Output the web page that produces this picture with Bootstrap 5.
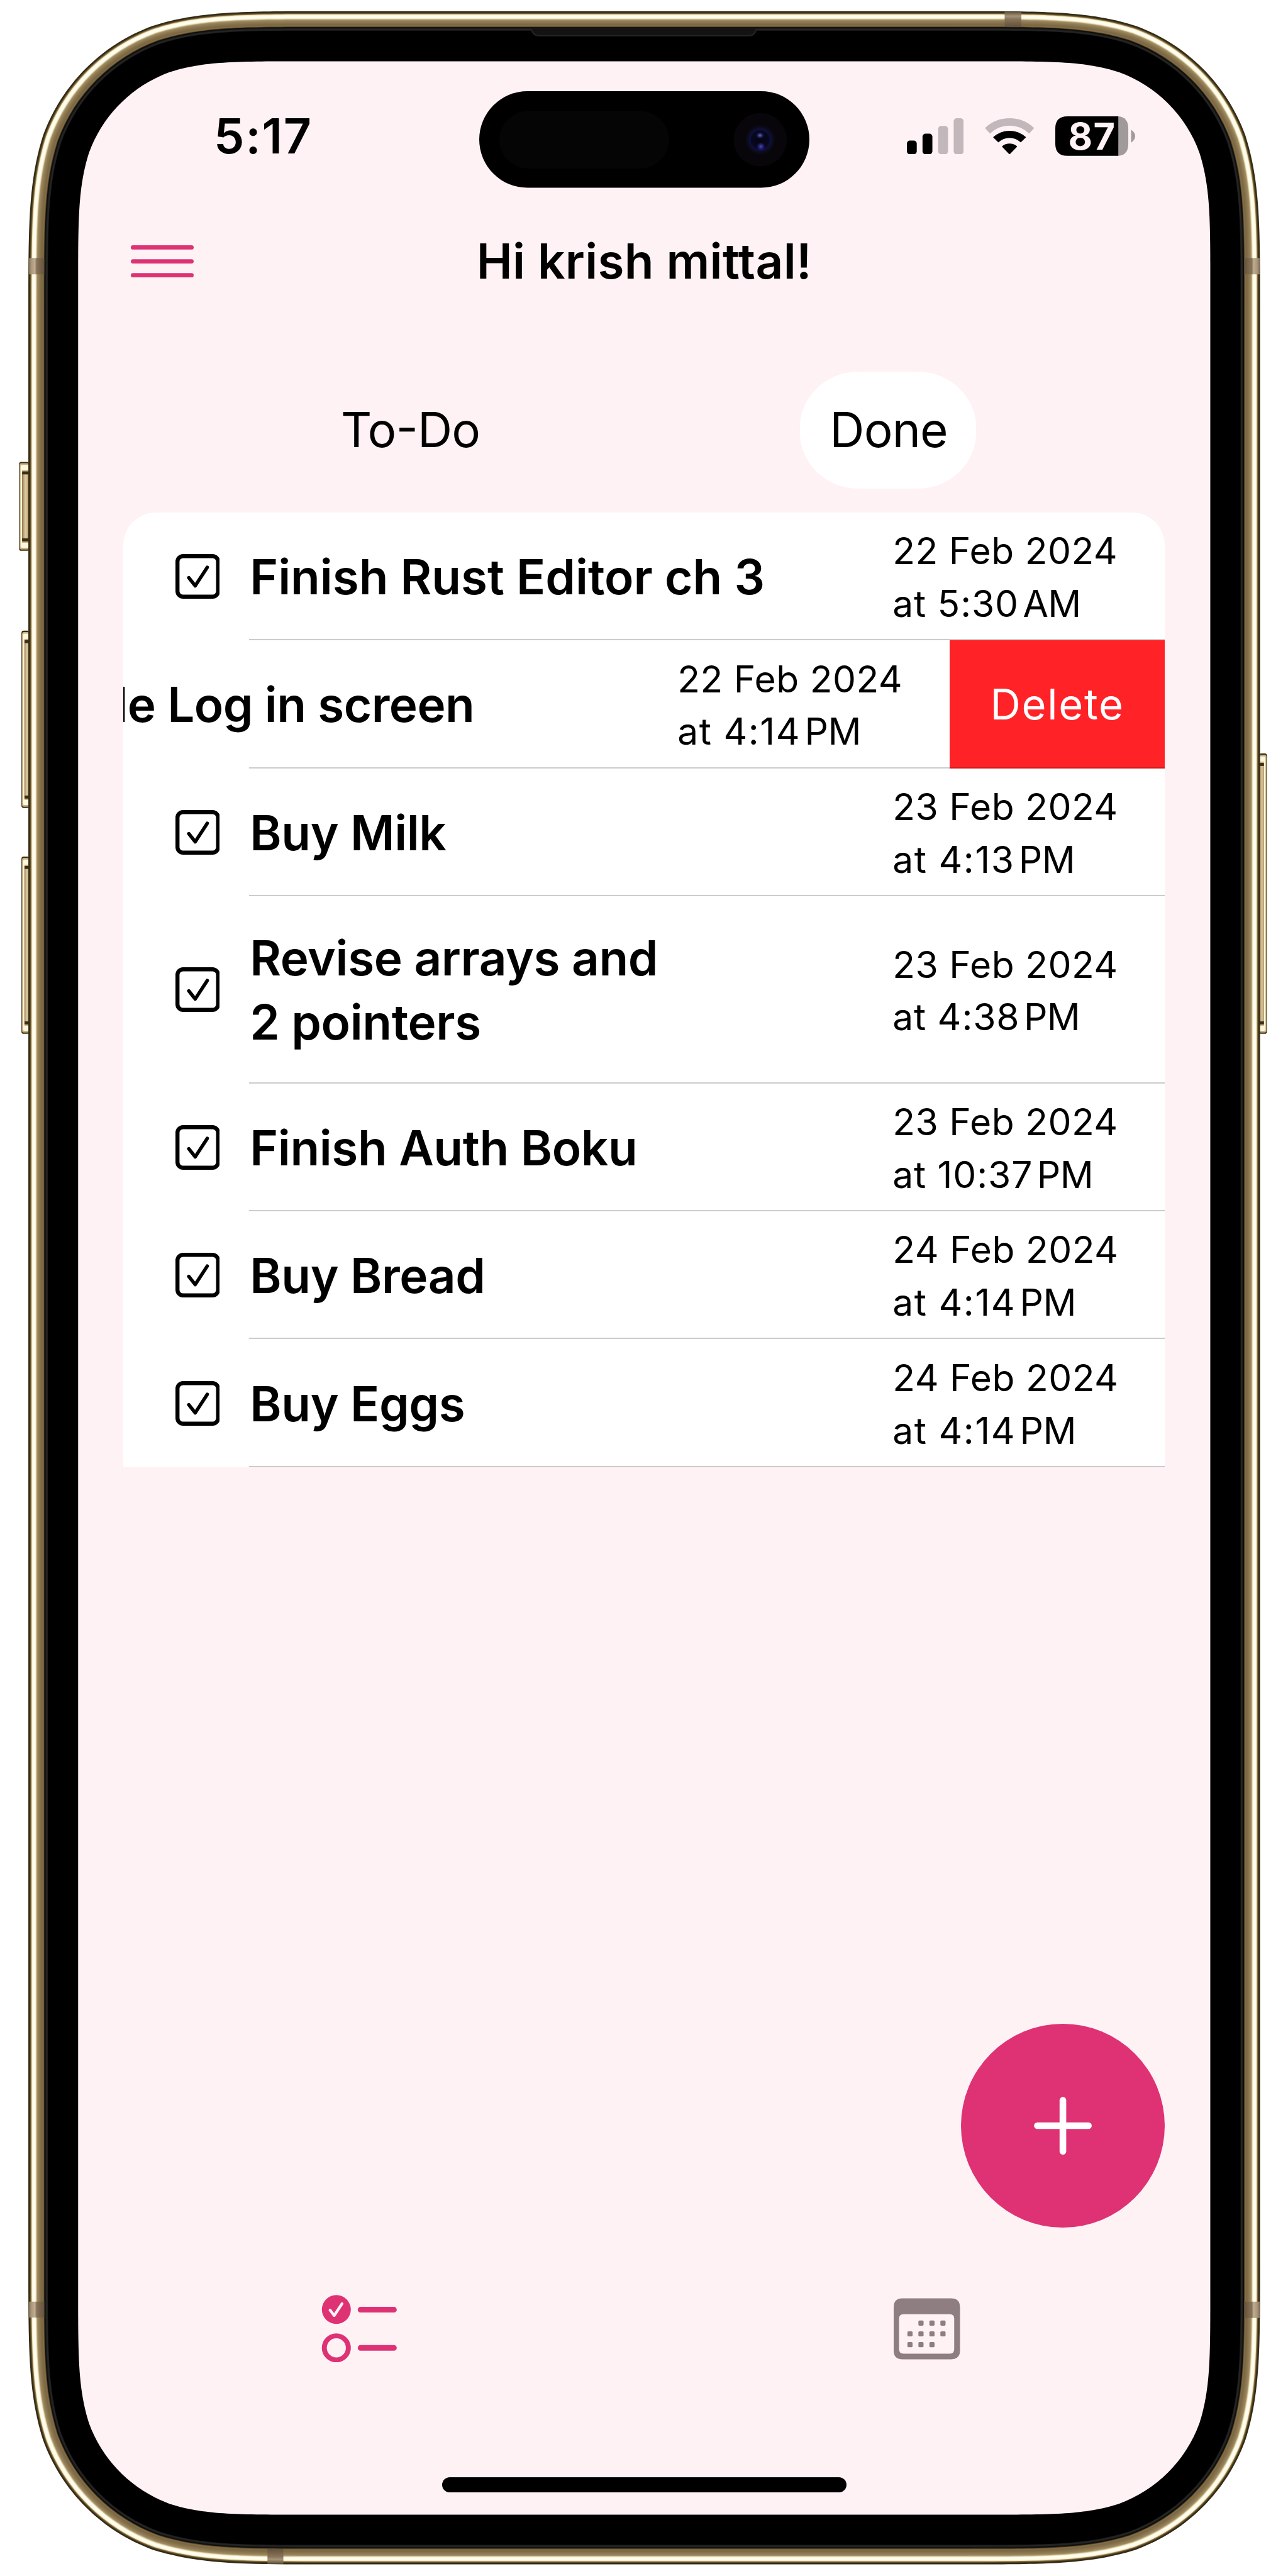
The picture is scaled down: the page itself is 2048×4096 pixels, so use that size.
<!DOCTYPE html>
<html lang="en">
<head>
<meta charset="utf-8">
<meta name="viewport" content="width=device-width, initial-scale=1">
<title>To-Do</title>
<link href="https://cdn.jsdelivr.net/npm/bootstrap@5.3.0/dist/css/bootstrap.min.css" rel="stylesheet">
<style>
  /* 1rem is one thirtieth of the page width, so the phone scales with the window */
  html { font-size: calc(100vw / 30); }
  body { font-family: Inter, "Liberation Sans", sans-serif; font-size: 1.12rem; line-height: 1.2; color: #000; background: #fff; overflow: hidden; }
  svg { display: block; flex: none; }
  .device { width: 30rem; height: 60rem; padding: 1.44rem 1.81rem 0 1.82rem; }
  .chassis { inset: 0; width: 30rem; height: 60rem; z-index: -1; }
  .status { height: 3.46rem; padding-left: 3.16rem; }
  .clock { width: 6.18rem; font-size: 1.13rem; letter-spacing: .025rem; }
  .island { width: 7.69rem; height: 2.25rem; margin: .16rem 2.27rem 0 0; }
  .signal { width: 1.32rem; height: .84rem; }
  .wifi { width: 1.15rem; height: .84rem; margin-left: .5rem; }
  .battery { width: 1.86rem; height: .92rem; margin-left: .495rem; }
  .battery svg { inset: 0; width: 100%; height: 100%; }
  .charge { font-size: .87rem; letter-spacing: .02rem; width: 1.47rem; padding-left: .295rem; color: #fff2f4; }
  .topbar { height: 2.38rem; padding: 0 2.69rem 0 1.225rem; }
  .burger { width: 1.465rem; height: .75rem; }
  .greeting { font-size: 1.12rem; letter-spacing: .0045rem; line-height: 1.2; }
  .switch { margin-top: 1.375rem; padding: 0 1.945rem 0 2.18rem; }
  .switch .nav-link { height: 2.73rem; width: 4.09rem; padding: 0; color: #000; font-size: 1.12rem; letter-spacing: -.012rem; }
  .switch .nav-link.active { background: #fff; border-radius: 1.36rem / 1.3rem; padding-left: .03rem; }
  .hyph { display: inline-block; transform: translateY(-.06rem); }
  .tasks { margin: .55rem 1.06rem 0 1.05rem; border-radius: .76rem .76rem 0 0; background: #fff; overflow: hidden; }
  .task { height: 2.98rem; position: relative; padding-left: 1.21rem; }
  .task.tall { height: 4.36rem; }
  .task::after { content: ""; position: absolute; left: 2.93rem; right: 0; bottom: 0; height: 0; border-top: 2px solid rgba(0, 0, 0, .2); }
  .tick { width: 1.04rem; height: 1.04rem; }
  .name { margin-left: .7rem; letter-spacing: -.006rem; line-height: 1.49rem; white-space: nowrap; padding-top: .04rem; }
  .name.long { letter-spacing: -.001rem; }
  .due { width: 6.34rem; font-size: .86rem; line-height: 1.225rem; letter-spacing: .007rem; white-space: nowrap; padding-top: .04rem; }
  .at { letter-spacing: .013rem; }
  .at.slim { letter-spacing: .022rem; }
  .ampm { letter-spacing: -.008rem; word-spacing: -.14rem; }
  .swiped { padding-left: 0; }
  .swiped .name { width: 8.18rem; margin: 0; direction: rtl; letter-spacing: -.008rem; }
  .swiped .due { width: 6.34rem; }
  .remove { width: 5.01rem; background: #ff2226; color: #fff; border: 0; border-radius: 0; padding: 0; font-size: .98rem; letter-spacing: .026rem; }
  .add { width: 4.75rem; height: 4.75rem; margin: 12.96rem 1.055rem 0 auto; padding: 0; border: 0; background: #de3275; }
  .add svg { width: 1.35rem; height: 1.35rem; }
  .bottom { margin-top: 1.57rem; height: 1.57rem; }
  .bottom svg { height: 1.57rem; }
  .home { width: 9.42rem; height: .35rem; margin-top: 2.68rem; background: #000; }
</style>
<script src="https://cdn.jsdelivr.net/npm/bootstrap@5.3.0/dist/js/bootstrap.bundle.min.js"></script>
</head>
<body>
<svg width="0" height="0" class="position-absolute" aria-hidden="true">
  <symbol id="tick" viewBox="0 0 104 104">
    <rect x="4.7" y="4.7" width="94.6" height="94.6" rx="13" fill="none" stroke="#000" stroke-width="9.4"/>
    <path d="M31 55L46 74L74 31" fill="none" stroke="#000" stroke-width="8" stroke-linecap="round" stroke-linejoin="round"/>
  </symbol>
</svg>

<div class="device position-relative">
  <svg class="chassis position-absolute" viewBox="0 0 3000 6000" aria-hidden="true">
    <defs>
      <linearGradient id="keyL" x1="0" x2="1"><stop offset="0" stop-color="#9c8459"/><stop offset=".5" stop-color="#e2caa0"/><stop offset=".8" stop-color="#c8b084"/><stop offset="1" stop-color="#6a5836"/></linearGradient>
      <linearGradient id="keyR" x1="1" x2="0"><stop offset="0" stop-color="#c8b084"/><stop offset=".5" stop-color="#d8c096"/><stop offset=".85" stop-color="#b39b70"/><stop offset="1" stop-color="#4a3c20"/></linearGradient>
      <linearGradient id="bandV" x1="0" x2="1"><stop offset="0" stop-color="#7b6a50"/><stop offset=".15" stop-color="#a8947a"/><stop offset=".4" stop-color="#c0ae90"/><stop offset=".5" stop-color="#86735a"/><stop offset="1" stop-color="#65523a"/></linearGradient>
      <linearGradient id="bandH" x1="0" x2="0" y1="0" y2="1"><stop offset="0" stop-color="#5b4b34"/><stop offset=".3" stop-color="#a8947a"/><stop offset=".5" stop-color="#86735a"/><stop offset="1" stop-color="#65523a"/></linearGradient>
      <radialGradient id="lens"><stop offset="0" stop-color="#05050f"/><stop offset=".6" stop-color="#070720"/><stop offset=".76" stop-color="#101040"/><stop offset=".86" stop-color="#0a0b1e"/><stop offset="1" stop-color="#0b0c14"/></radialGradient>
      <radialGradient id="glintA"><stop offset="0" stop-color="#6a6ed0"/><stop offset="1" stop-color="#2a2a80" stop-opacity="0"/></radialGradient>
      <radialGradient id="glintB"><stop offset="0" stop-color="#1d6a70"/><stop offset=".5" stop-color="#2a1a7a"/><stop offset="1" stop-color="#3a108a" stop-opacity="0"/></radialGradient>
    </defs>
    <g id="keys"></g>
    <g id="body"></g>
    <rect x="67" y="601" width="36" height="38" fill="url(#bandV)"/>
    <rect x="67" y="5361" width="36" height="37" fill="url(#bandV)"/>
    <rect x="-2934" y="601" width="36" height="38" fill="url(#bandV)" transform="scale(-1 1)"/>
    <rect x="-2934" y="5361" width="36" height="38" fill="url(#bandV)" transform="scale(-1 1)"/>
    <rect x="2340" y="27" width="39" height="35" fill="url(#bandH)"/>
    <rect x="623" y="-5972" width="37" height="35" fill="url(#bandH)" transform="scale(1 -1)"/>
    <path d="M1237 67Q1241 83 1254 83H1746Q1758 83 1762 67Z" fill="#131313"/>
    <path d="M1237 67Q1241 83 1254 83H1746Q1758 83 1762 67" fill="none" stroke="#242424" stroke-width="3"/>
  </svg>

  <header class="status d-flex align-items-center">
    <div class="clock fw-semibold">5:17</div>
    <svg class="island" viewBox="1116 212 769 225">
      <rect x="1116" y="212" width="769" height="225" rx="112.5"/>
      <rect x="1163" y="258" width="395" height="134" rx="67" fill="#050505"/>
      <circle cx="1770.5" cy="325" r="62" fill="#08060a"/>
      <circle cx="1770.5" cy="325" r="33" fill="url(#lens)"/>
      <ellipse cx="1770" cy="315" rx="10" ry="8" fill="url(#glintA)"/>
      <ellipse cx="1772" cy="341" rx="10" ry="10" fill="url(#glintB)"/>
    </svg>
    <svg class="signal" viewBox="2112 273 132 84">
      <rect x="2112" y="325" width="23" height="32" rx="7"/><rect x="2148.4" y="309" width="23" height="48" rx="7"/>
      <rect x="2184.8" y="291" width="23" height="66" rx="7" fill="#c2b7ba"/><rect x="2221" y="273" width="23" height="84" rx="7" fill="#c2b7ba"/>
    </svg>
    <svg class="wifi" viewBox="2293.5 273 115 84">
      <path d="M2295 295.9A83 83 0 0 1 2407 295.9L2396.5 307.5A66 66 0 0 0 2305.5 307.5Z" fill="#c2b7ba" stroke="#c2b7ba" stroke-width="2" stroke-linejoin="round"/>
      <path d="M2314 317.5A55 55 0 0 1 2388 317.5L2377 328A38 38 0 0 0 2325 328Z" stroke="#000" stroke-width="2" stroke-linejoin="round"/>
      <path d="M2334.5 339A26 26 0 0 1 2367.5 339L2351 356Z" stroke="#000" stroke-width="2" stroke-linejoin="round"/>
    </svg>
    <div class="battery position-relative d-flex align-items-center">
      <svg class="position-absolute" viewBox="0 0 186 92">
        <path d="M147 0Q170 2 170 28V64Q170 90 147 92Z" fill="#a19a9b"/>
        <path d="M147 0H28Q0 0 0 28V64Q0 92 28 92H147Z"/>
        <path d="M176.5 31Q186 37 186 46T176.5 61Z" fill="#a19a9b"/>
      </svg>
      <span class="charge fw-bold position-relative">87</span>
    </div>
  </header>

  <nav class="topbar d-flex align-items-center">
    <svg class="burger" viewBox="0 0 146.5 75"><path d="M5 5H141.5M5 37.5H141.5M5 70H141.5" stroke="#de3275" stroke-width="10" stroke-linecap="round"/></svg>
    <h1 class="greeting flex-grow-1 text-center fw-semibold mb-0">Hi krish mittal!</h1>
  </nav>

  <ul class="switch nav row g-0">
    <li class="col-6 d-flex justify-content-center"><a class="nav-link d-flex align-items-center justify-content-center"><span>To<span class="hyph">-</span>Do</span></a></li>
    <li class="col-6 d-flex justify-content-center"><a class="nav-link active d-flex align-items-center justify-content-center">Done</a></li>
  </ul>

  <main class="tasks">
    <div class="task d-flex align-items-center">
      <svg class="tick"><use href="#tick"/></svg>
      <div class="name long fw-semibold">Finish Rust Editor ch 3</div>
      <div class="due ms-auto">22 Feb 2024<br><span class="at">at 5:30</span><span class="ampm"> AM</span></div>
    </div>
    <div class="task swiped d-flex align-items-center">
      <div class="name fw-semibold overflow-hidden">le Log in screen</div>
      <div class="due ms-auto">22 Feb 2024<br><span class="at slim">at 4:14</span><span class="ampm"> PM</span></div>
      <button class="remove btn h-100">Delete</button>
    </div>
    <div class="task d-flex align-items-center">
      <svg class="tick"><use href="#tick"/></svg>
      <div class="name fw-semibold">Buy Milk</div>
      <div class="due ms-auto">23 Feb 2024<br><span class="at slim">at 4:13</span><span class="ampm"> PM</span></div>
    </div>
    <div class="task tall d-flex align-items-center">
      <svg class="tick"><use href="#tick"/></svg>
      <div class="name fw-semibold">Revise arrays and<br>2 pointers</div>
      <div class="due ms-auto">23 Feb 2024<br><span class="at">at 4:38</span><span class="ampm"> PM</span></div>
    </div>
    <div class="task d-flex align-items-center">
      <svg class="tick"><use href="#tick"/></svg>
      <div class="name fw-semibold">Finish Auth Boku</div>
      <div class="due ms-auto">23 Feb 2024<br><span class="at">at 10:37</span><span class="ampm"> PM</span></div>
    </div>
    <div class="task d-flex align-items-center">
      <svg class="tick"><use href="#tick"/></svg>
      <div class="name fw-semibold">Buy Bread</div>
      <div class="due ms-auto">24 Feb 2024<br><span class="at slim">at 4:14</span><span class="ampm"> PM</span></div>
    </div>
    <div class="task d-flex align-items-center">
      <svg class="tick"><use href="#tick"/></svg>
      <div class="name fw-semibold">Buy Eggs</div>
      <div class="due ms-auto">24 Feb 2024<br><span class="at slim">at 4:14</span><span class="ampm"> PM</span></div>
    </div>
  </main>

  <button class="add btn rounded-circle d-flex align-items-center justify-content-center" aria-label="Add task">
    <svg viewBox="0 0 135 135"><path d="M8 67.5H127M67.5 8V127" stroke="#fff" stroke-width="15.5" stroke-linecap="round"/></svg>
  </button>

  <footer>
    <div class="bottom row g-0">
      <div class="col-6 d-flex justify-content-center">
        <svg viewBox="741.5 5346 200 157" width="136.5">
          <circle cx="783.7" cy="5380" r="33.7" fill="#de3275"/>
          <path d="M769 5381.500L778.8 5394L797 5366.500" fill="none" stroke="#fff2f4" stroke-width="6.5" stroke-linecap="round" stroke-linejoin="round"/>
          <circle cx="783.7" cy="5469.4" r="28" fill="none" stroke="#de3275" stroke-width="11.5"/>
          <path d="M840 5380.5H918M840 5469.5H918" stroke="#de3275" stroke-width="13" stroke-linecap="round"/>
        </svg>
      </div>
      <div class="col-6 d-flex justify-content-center">
        <svg viewBox="2082 5346 156 157" width="106.5">
          <path fill-rule="evenodd" fill="#8e7e81" d="M2102.500 5354H2216Q2236.500 5354 2236.500 5374.500V5475.500Q2236.500 5496 2216 5496H2102.500Q2082 5496 2082 5475.500V5374.500Q2082 5354 2102.500 5354ZM2105 5391Q2094.500 5391 2094.500 5401.500V5472.500Q2094.500 5483 2105 5483H2213Q2223 5483 2223 5472.500V5401.500Q2223 5391 2213 5391Z"/>
          <g id="days" fill="#8e7e81"></g>
        </svg>
      </div>
    </div>
    <div class="home rounded-pill mx-auto"></div>
  </footer>
</div>

<script>
  // Rounded rectangle with continuous-curvature corners
  function squircle(l, t, r, b, k) {
    const corner = (x, y, ux, uy, vx, vy) => {
      // (ux,uy) points back along the incoming edge, (vx,vy) along the outgoing edge
      const p = (a, c) => `${(x + ux * a * k + vx * c * k).toFixed(2)} ${(y + uy * a * k + vy * c * k).toFixed(2)}`;
      return `L${p(1.5287, 0)}C${p(1.0885, 0)} ${p(.8684, 0)} ${p(.6315, .0749)}` +
             `C${p(.3728, .1691)} ${p(.1691, .3728)} ${p(.0749, .6315)}` +
             `C${p(0, .8684)} ${p(0, 1.0885)} ${p(0, 1.5287)}`;
    };
    return `M${(l + r) / 2} ${t}` + corner(r, t, -1, 0, 0, 1) + corner(r, b, 0, -1, -1, 0) +
           corner(l, b, 1, 0, 0, -1) + corner(l, t, 0, 1, 1, 0) + 'Z';
  }
  const stops = [[0,'37301d'],[2,'2e2610'],[4,'5a4a28'],[6,'8c7646'],[7.5,'f3e4bb'],[9.5,'fffdf0'],[15.5,'fffdec'],[17.5,'e8d8ac'],[19.5,'a39068'],[24,'8f7b53'],[31,'7a6743'],[34.5,'88714a'],[36,'4a3c20'],[37.5,'0c0b08'],[40,'1a1a1a'],[42,'2c2c2c'],[44,'1c1c1c'],[45.5,'000000']];
  const rgb = h => [0, 2, 4].map(i => parseInt(h.slice(i, i + 2), 16));
  function shade(d) {
    for (let i = 1; i < stops.length; i++) if (d <= stops[i][0]) {
      const [a, ca] = stops[i - 1], [b, cb] = stops[i], f = (d - a) / (b - a), x = rgb(ca), y = rgb(cb);
      return `rgb(${x.map((v, j) => Math.round(v + (y[j] - v) * f))})`;
    }
    return '#000';
  }
  const ring = (d, fill) => `<path d="${squircle(66 + d, 26 + d, 2935 - d, 5973 - d, 458 - d)}" fill="${fill}"/>`;
  let rings = '';
  for (let d = 0; d < 45; d += 1.25) rings += ring(d, shade(d));
  rings += ring(45.5, '#000');
  rings += `<path d="${squircle(182, 143, 2819, 5857, 337)}" fill="#fff2f4"/>`;
  document.getElementById('body').innerHTML = rings;

  // Side keys: action, volume up, volume down, power
  const key = (x, y, w, h, side) => {
    const L = side === 'L', ix = L ? x + 7 : x, iw = w - 7;
    return `<rect x="${x}" y="${y}" width="${w}" height="${h}" rx="5" fill="#3a2e16"/>` +
      `<rect x="${L ? x + 1.5 : x}" y="${y + 3}" width="${w - 1.5}" height="${h - 6}" rx="4" fill="#c9b07c"/>` +
      `<rect x="${L ? x + 3.5 : x}" y="${y + 7}" width="${w - 3.5}" height="${h - 14}" rx="3" fill="#fff8e0"/>` +
      `<rect x="${ix}" y="${y + 19}" width="${iw}" height="${h - 38}" fill="#c9b07c"/>` +
      `<rect x="${ix}" y="${y + 22}" width="${iw}" height="${h - 44}" fill="#3a2e16"/>` +
      `<rect x="${ix}" y="${y + 29}" width="${iw}" height="${h - 58}" fill="url(#key${side})"/>`;
  };
  document.getElementById('keys').innerHTML =
    key(44.5, 1076, 23, 207, 'L') + key(50, 1469, 18, 413, 'L') + key(50, 1995, 18, 413, 'L') + key(2933, 1755, 18, 653, 'R');

  document.getElementById('days').innerHTML = [[1,0],[2,0],[3,0],[0,1],[1,1],[2,1],[3,1],[0,2],[1,2],[2,2]]
    .map(([c, r]) => `<rect x="${2114 + c * 25.6}" y="${5405.6 + r * 25.2}" width="12" height="12" rx="2.5"/>`).join('');
</script>
</body>
</html>
